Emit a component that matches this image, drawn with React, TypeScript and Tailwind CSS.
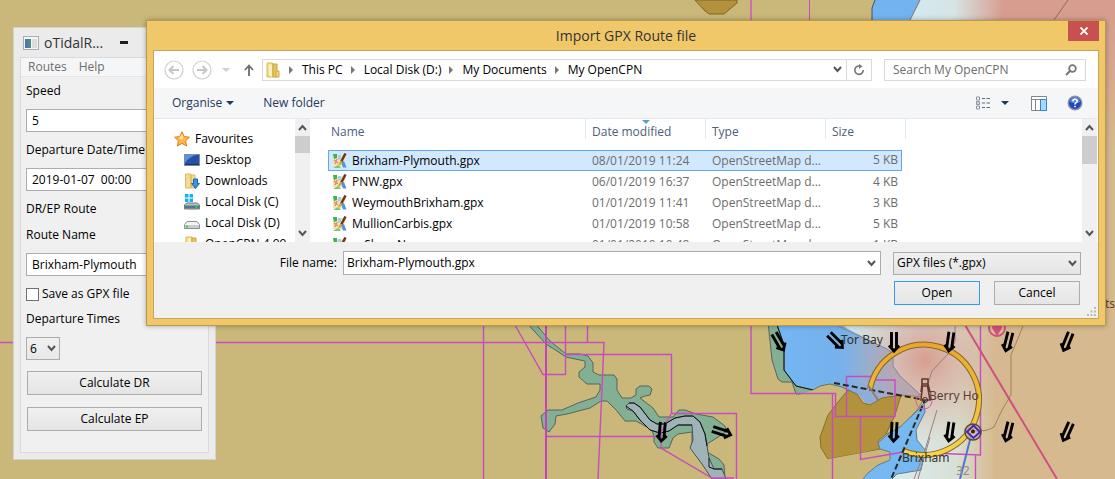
import type { ReactNode } from "react";

type Entry = { name: string; date: string; size: string };

const files: Entry[] = [
  { name: "Brixham-Plymouth.gpx", date: "08/01/2019 11:24", size: "5 KB" },
  { name: "PNW.gpx", date: "06/01/2019 16:37", size: "4 KB" },
  { name: "WeymouthBrixham.gpx", date: "01/01/2019 11:41", size: "3 KB" },
  { name: "MullionCarbis.gpx", date: "01/01/2019 10:58", size: "5 KB" },
  { name: "ruSharpNew.gpx", date: "01/01/2019 10:48", size: "1 KB" },
];

const arrows: [number, number, number][] = [
  [779, 342, -30],
  [836, 341, -45],
  [894, 342, 0],
  [950, 342, 8],
  [1008, 342, 14],
  [1067, 342, 22],
  [894, 432, 3],
  [950, 432, 8],
  [1008, 432, 14],
  [1067, 432, 24],
  [662, 432, 5],
  [722, 432, -72],
];

function Chart() {
  return (
    <svg
      className="absolute inset-0 h-full w-full"
      viewBox="0 0 1115 479"
      preserveAspectRatio="xMinYMin slice"
      aria-hidden="true"
    >
      <defs>
        <linearGradient id="topSea" x1="915" x2="1003" y1="0" y2="0" gradientUnits="userSpaceOnUse">
          <stop offset="0" stopColor="#d3e9f0" />
          <stop offset="0.45" stopColor="#d6e4e4" />
          <stop offset="1" stopColor="#d79e90" />
        </linearGradient>
        <linearGradient id="rightEdge" x1="0" x2="0" y1="20" y2="150" gradientUnits="userSpaceOnUse">
          <stop offset="0" stopColor="#d79e90" />
          <stop offset="1" stopColor="#d6b98f" />
        </linearGradient>
        <linearGradient id="lowSea" x1="840" x2="995" y1="0" y2="0" gradientUnits="userSpaceOnUse">
          <stop offset="0" stopColor="#cfe8f2" />
          <stop offset="0.45" stopColor="#d9e8e8" />
          <stop offset="0.75" stopColor="#d9e0d4" />
          <stop offset="1" stopColor="#d6b98f" />
        </linearGradient>
        <radialGradient id="glow" cx="925" cy="360" r="85" gradientUnits="userSpaceOnUse">
          <stop offset="0" stopColor="#d89a8c" stopOpacity="0.95" />
          <stop offset="0.4" stopColor="#d8a595" stopOpacity="0.6" />
          <stop offset="1" stopColor="#d8b8a0" stopOpacity="0" />
        </radialGradient>
        <linearGradient id="bay" x1="776" x2="925" y1="0" y2="0" gradientUnits="userSpaceOnUse">
          <stop offset="0" stopColor="#74b6f4" />
          <stop offset="0.5" stopColor="#76b0ea" />
          <stop offset="1" stopColor="#8fa6d4" />
        </linearGradient>
        <linearGradient id="ring" x1="0" x2="0" y1="343" y2="455" gradientUnits="userSpaceOnUse">
          <stop offset="0" stopColor="#eba52c" />
          <stop offset="1" stopColor="#f5d448" />
        </linearGradient>
      </defs>

      <rect width="1115" height="479" fill="#c9b87a" />
      <path d="M695 0 704 10 709 14H724L737 3V0Z" fill="#b2923d" stroke="#82651f" />
      <path d="M875 0 872 8V22H909L920 0Z" fill="#73b4f0" />
      <path d="M920 0 909 22H1115V0Z" fill="url(#topSea)" />
      <path d="M875 0 872 8V22" fill="none" stroke="#3f5568" />
      <path d="M920 0 909 22M1068 0 1054 20" fill="none" stroke="#8a6a66" />
      <rect x="1000" y="20" width="115" height="459" fill="url(#rightEdge)" />
      <path d="M751 0V22" stroke="#cf6fae" strokeWidth="2" />
      <path d="M809.500 0V22" stroke="#c64cbe" />

      <path d="M838 320H1012V479H860L890 455 925 400Z" fill="url(#lowSea)" />
      <path d="M776 322 784 345V370L796 385 813 390 820 386 830 384 842 387 850 391 860 396 866 404 873 404 882 398 901 395 925 399 900 376 893 366 893 353 887 349 838 324Z" fill="url(#bay)" />
      <rect x="830" y="320" width="190" height="140" fill="url(#glow)" />
      <path d="M838 326 887 349 893 353V366L900 376 925 399" fill="none" stroke="#7f8a99" />
      <path d="M768 322 772 360 778 379 782 382H792L796 394H806L813 390 796 386 784 370V345L776 322Z" fill="#83b092" stroke="#56645f" />
      <path d="M776 322 784 345V370L796 386 813 390" fill="none" stroke="#111" />
      <path d="M813 390 820 386 830 384 842 387 850 391 838 402 828 415 820 437V448L796 430 796 396Z" fill="#c9b87a" />
      <path d="M901 395 925 397 917 410 900 428 886 434Z" fill="#cfb47c" stroke="#9b8456" />
      <path d="M848 390 857 394 863 403 870 405 882 398 901 395 895 415 886 434 878 441 880 449 862 453 845 456 828 459 821 448 820 437 828 415 838 402Z" fill="#b2923d" stroke="#8a6e2a" />
      <path d="M878 450 890 454 890 460 878 465 868 473 862 480H840L828 459 845 456Z" fill="#c9b87a" />
      <path d="M924 403 917 411 900 427 888 434 878 443 880 449 890 452V460L878 465 868 473 862 480H891L897 474 921 470 925 450 917 440 916 430 925 412Z" fill="#76b8f0" stroke="#64788a" />
      <path d="M813 390 820 386 830 384 842 387 850 391" fill="none" stroke="#6b7160" />
      <path d="M937 410 925 450 914 479M930 437 918 479M955 326V342L948 354 932 371 926 390" fill="none" stroke="#958280" />
      <path d="M1023 326 1011 355V395L1002 410 994 427Q986 432 974 431" fill="none" stroke="#a5805f" />

      <path d="M751 322V393.500H835.500V416.500H860.500V459.500L903 452 980.500 455V322M832.500 393.500V479M846.500 416.500V376.500H872L876 380H895V416.500H860M975.500 455V479" fill="none" stroke="#c84bbf" strokeWidth="1.400" />
      <path d="M965 325 1057 479" stroke="#d05080" strokeWidth="2" />
      <circle cx="997" cy="328" r="8" fill="none" stroke="#d05080" strokeWidth="2" />
      <path d="M997 336 992 328Q993 321 997 322 1002 321 1002 328Z" fill="#d05080" />

      <path d="M870 389A55 55 0 1 1 904 451" fill="none" stroke="#80682d" strokeWidth="6" />
      <path d="M870 389A55 55 0 1 1 904 451" fill="none" stroke="url(#ring)" strokeWidth="4" />
      <path d="M834 383 925 400 891 479" fill="none" stroke="#2c2725" strokeWidth="2" strokeDasharray="6 3" />
      <path d="M868 385 878 400" stroke="#8c7c72" strokeWidth="2" />
      <circle cx="924" cy="401" r="8" fill="none" stroke="#d45bb8" />
      <path d="M921 400 922.500 386H927.500L930 400ZM922 379H928V384H922ZM922 384 921 392M928 384 930 392" fill="#d8b3a2" stroke="#62362d" strokeWidth="1.500" />
      <circle cx="925" cy="400" r="2.500" fill="none" stroke="#3a2b2b" />
      <path d="M971 436 960 479" stroke="#4f76d2" strokeWidth="2" />
      <circle cx="973" cy="432" r="8" fill="#d9b98f" fillOpacity="0.6" stroke="#554238" strokeWidth="1.500" />
      <path d="M973.500 425.500 980 432 973.500 438 967 432Z" fill="none" stroke="#3d27cf" strokeWidth="2" />
      <circle cx="973" cy="431.500" r="2" fill="#35201a" />

      <path d="M526 322 546 344 557 351 566 357 580 360 585 361 585 367 579 372V377L587 384H600L600 390 596 397 578 403 562 410H548L541 416 543 428 549 432 555 424 556 416 567 414 590 408 601 401H607L617 411 625 421H636L652 430 654 437V442L658 448H669L673 438 678 434 692 432V447L704 464 713 479H725L724 465 719 459 707 452V444L726 432 725 426 713 417 696 414 685 410H679L673 417H659L653 408 640 398 645 396 650 395 652 389 649 386H640L636 389V395L631 398H622L617 390V379L614 375H599L593 372 593 363 588 356 580 354H566L550 341 534 322Z" fill="#83b092" stroke="#56645f" />
      <path d="M629 403H634L640 407 650 420 657 424H665L675 418 685 416H693L700 422 705 434 707 446 709 458 714 469H722L726 479H712L702 464 690 448 693 440 692 425H678L669 431 660 433 650 430 640 420 633 411 627 409 626 406Z" fill="#a0b4b8" stroke="#46555a" />
      <path d="M629 403H634L640 407 650 420 657 424H665L675 418 685 416H693L700 422 705 434 707 446M709 458V467L714 469H722M626 406 633 411 640 420 650 430 660 433 669 431 678 425H692" fill="none" stroke="#111" />
      <path d="M0 342.500H604L598 479M483.500 322V479M515 325 543 374.500H565.500V322M587.500 322V342M545.500 436.500H662M565 354.500H671.500V413.500H736.500V479M671 414 661 432V448L712 478H734" fill="none" stroke="#c84bbf" strokeWidth="1.400" />
      <path d="M546 322V479" stroke="#c741bf" strokeWidth="2" />

      {arrows.map(([x, y, angle]) => (
        <g
          key={`${x}-${y}`}
          transform={`translate(${x} ${y}) rotate(${angle})`}
          fill="none"
          stroke="#000"
          strokeWidth="2.900"
        >
          <path d="M-2.500-10V7M2.500-10V7M-5 3.500 0 9 5 3.500" />
        </g>
      ))}

      <g fontFamily="Noto Sans, sans-serif" fontSize="12" fill="#33302f">
        <text x="841" y="344">Tor Bay</text>
        <text x="929" y="400" fill="#5d3c35">Berry Ho</text>
        <text x="902" y="462">Brixham</text>
        <text x="956" y="475" fill="#8f908c">32</text>
        <text x="1105" y="308" fill="#6b4423">ts</text>
      </g>
    </svg>
  );
}

function Chevron({ className = "" }: { className?: string }) {
  return (
    <svg viewBox="0 0 9 7" className={`h-[7px] w-[9px] ${className}`} aria-hidden="true">
      <path d="M1 1 4.500 5 8 1" fill="none" stroke="#555" strokeWidth="2" />
    </svg>
  );
}

function ScrollBar({ thumb }: { thumb: ReactNode }) {
  return (
    <div className="flex w-[15px] shrink-0 flex-col items-center bg-[#f0f0f0]" aria-hidden="true">
      <div className="flex h-[17px] items-center">
        <Chevron className="rotate-180" />
      </div>
      {thumb}
      <div className="mt-auto flex h-[17px] items-center">
        <Chevron />
      </div>
    </div>
  );
}

function FolderIcon() {
  return (
    <svg viewBox="0 0 16 16" className="h-4 w-4 shrink-0" aria-hidden="true">
      <path d="M2 1H8V15H2Z" fill="#f4de90" stroke="#d9b954" />
      <path d="M8 2H12V15H8Z" fill="#e4c561" stroke="#cda43f" />
      <path d="M4 2 7 3V15L4 13Z" fill="#fbf0bd" />
      <path d="M11 9H14V15H11Z" fill="#f2d66f" stroke="#cfa942" />
    </svg>
  );
}

function StarIcon() {
  return (
    <svg viewBox="0 0 16 16" className="h-4 w-4 shrink-0" aria-hidden="true">
      <path d="M8 .8 10.200 5.600 15.400 6.200 11.600 9.800 12.600 15 8 12.400 3.400 15 4.400 9.800.6 6.200 5.800 5.600Z" fill="#fdb845" stroke="#e07a24" />
      <path d="M8 3 9.400 6.500 8 9 5 7Z" fill="#ffe19a" />
    </svg>
  );
}

function DesktopIcon() {
  return (
    <svg viewBox="0 0 16 16" className="h-4 w-4 shrink-0" aria-hidden="true">
      <rect x=".5" y="2.500" width="15" height="11" fill="#2450a8" stroke="#7d8da8" />
      <path d="M1 3H12Q5 5 1 11Z" fill="#5c8fdc" />
      <path d="M1 12.500H15" stroke="#1a2e5a" />
    </svg>
  );
}

function DownloadsIcon() {
  return (
    <svg viewBox="0 0 16 16" className="h-4 w-4 shrink-0" aria-hidden="true">
      <path d="M1.500 1H7V15H1.500ZM7 2H11V15H7Z" fill="#f1dc92" stroke="#d9bb62" />
      <path d="M9.500 6H13.500V10.500H15.500L11.500 15.500 7.500 10.500H9.500Z" fill="#3f92e0" stroke="#1f63ad" />
    </svg>
  );
}

function DiskIcon({ system = false }: { system?: boolean }) {
  return (
    <svg viewBox="0 0 16 16" className="h-4 w-4 shrink-0" aria-hidden="true">
      {system ? (
        <>
          <path d="M2.500 9H13.500L15.500 11V15H.5V11Z" fill="#b8c1c8" stroke="#74787e" />
          <path d="M1 11.500H15V14.500H1Z" fill="#4d7a8e" />
          <path d="M1 0H4.500V3.500H1ZM5.500 0H9V3.500H5.500ZM1 4.500H4.500V8H1ZM5.500 4.500H9V8H5.500Z" fill="#16b4ec" />
        </>
      ) : (
        <>
          <path d="M3 6.500H13L15.500 9.500V13.500H.5V9.500Z" fill="#f4f4f6" stroke="#8b8e94" />
          <path d="M1 10H15V13H1Z" fill="#c9ccd2" />
        </>
      )}
      <path d={system ? "M12.500 12V14" : "M3 10.500V12.500"} stroke="#38d04a" strokeWidth="2" />
    </svg>
  );
}

function GpxIcon() {
  return (
    <svg viewBox="0 0 16 16" className="h-4 w-4 shrink-0" aria-hidden="true">
      <path d="M1 2 6 3 10 2 14 3 12 8 14 14 10 13 6 15 1 13Z" fill="#f3e7a8" />
      <path d="M1 1H5V5L2 6Z" fill="#3fb44e" />
      <path d="M6 2H9V6L6 7Z" fill="#a9cdf3" />
      <path d="M1 15 6 12 9 15Z" fill="#7cc47a" />
      <path d="M9 9 12 8 14.500 14.500H11Z" fill="#4f94e8" />
      <path d="M2 7 6 10M5 6 3 11" stroke="#dc8c86" strokeWidth="1.500" />
      <path d="M13.500.5 9 9" stroke="#74341c" strokeWidth="2.500" />
      <path d="M9.500 8 7 12" stroke="#d8a13b" strokeWidth="2" />
    </svg>
  );
}

function SideItem({ icon, label, root = false }: { icon: ReactNode; label: string; root?: boolean }) {
  return (
    <li>
      <a href="#" className={`flex h-[21px] items-center gap-[5px] ${root ? "pl-5" : "pl-[30px]"}`}>
        {icon}
        <span className="whitespace-nowrap">{label}</span>
      </a>
    </li>
  );
}

function NavCircle({ label, flip = false }: { label: string; flip?: boolean }) {
  return (
    <button type="button" aria-label={label}>
      <svg viewBox="0 0 20 20" className={`h-5 w-5 ${flip ? "rotate-180" : ""}`} aria-hidden="true">
        <circle cx="10" cy="10" r="9" fill="#fff" stroke="#cfcfcf" strokeWidth="1.200" />
        <path d="M15 10H6.500M9.500 6 5.500 10 9.500 14" fill="none" stroke="#c6c6c6" strokeWidth="2" />
      </svg>
    </button>
  );
}

const crumbs = ["This PC", "Local Disk (D:)", "My Documents", "My OpenCPN"];
const fieldClass = "h-[23px] w-full border border-[#abadb3] bg-white px-[5px] text-xs text-black outline-none";
const buttonClass = "h-6 border border-[#acacac] bg-linear-to-b from-[#f0f0f0] to-[#e5e5e5] text-center leading-5";

function TidalWindow() {
  return (
    <section className="absolute top-[27px] left-[13px] w-[203px] border border-[#d2d2d2] bg-[#ebebeb] px-[6px] pb-[6px]">
      <header className="flex h-[29px] items-center text-[#333]">
        <svg viewBox="0 0 16 14" className="ml-[3px] h-[14px] w-4" aria-hidden="true">
          <rect x=".5" y=".5" width="15" height="13" fill="#f5f5f5" stroke="#a9adb3" />
          <path d="M2 3H8V12H2Z" fill="#4d8a8d" />
          <path d="M2 3H5V12H2Z" fill="#5275a2" />
          <path d="M9 3H14V12H9Z" fill="#dcdcdc" />
        </svg>
        <h1 className="ml-[5px] text-sm">oTidalR...</h1>
        <button type="button" aria-label="Minimise" className="ml-[17px] h-[3px] w-2 bg-[#1e1e1e]" />
      </header>
      <div className="border border-[#dadada] bg-[#f0f0f0] pb-[21px]">
        <nav className="flex h-[19px] items-center gap-3 border-b border-[#e6e6e6] bg-[#f5f6f7] pl-[7px] text-[#6d6d6d]">
          <button type="button">Routes</button>
          <button type="button">Help</button>
        </nav>
        <form className="flex flex-col px-[5px] pt-1" onSubmit={(e) => e.preventDefault()}>
          <label htmlFor="speed" className="leading-5">Speed</label>
          <input id="speed" defaultValue="5" className={`mt-2 ${fieldClass}`} />
          <label htmlFor="departure" className="mt-2 leading-5">Departure Date/Time</label>
          <input id="departure" defaultValue="2019-01-07  00:00" className={`mt-2 ${fieldClass}`} />
          <p className="mt-2 leading-5">DR/EP Route</p>
          <label htmlFor="route" className="mt-[6px] leading-5">Route Name</label>
          <input id="route" defaultValue="Brixham-Plymouth" className={`mt-2 ${fieldClass}`} />
          <label className="mt-2 flex items-center gap-[3px] leading-5">
            <input type="checkbox" className="h-[13px] w-[13px] appearance-none border border-[#707070] bg-white" />
            Save as GPX file
          </label>
          <label htmlFor="times" className="mt-[5px] leading-5">Departure Times</label>
          <div className="mt-2 grid w-[34px] items-center">
            <select id="times" className="col-start-1 row-start-1 h-[23px] appearance-none border border-[#acacac] bg-linear-to-b from-[#f0f0f0] to-[#e8e8e8] pl-[3px]">
              <option>6</option>
            </select>
            <Chevron className="pointer-events-none col-start-1 row-start-1 mr-1 justify-self-end" />
          </div>
          <button type="button" className={`mx-px mt-[11px] ${buttonClass}`}>Calculate DR</button>
          <button type="button" className={`mx-px mt-3 ${buttonClass}`}>Calculate EP</button>
        </form>
      </div>
    </section>
  );
}

function ImportDialog() {
  return (
    <section
      role="dialog"
      aria-label="Import GPX Route file"
      className="absolute top-5 right-[9px] left-[146px] border border-[#b99a4d] bg-[#f0c869] px-[6px] pb-[6px] shadow-[0_0_5px_rgba(0,0,0,0.3)]"
    >
      <header className="grid h-[29px] grid-cols-[1fr_auto_1fr] text-[#333]">
        <h2 className="col-start-2 self-center text-sm">Import GPX Route file</h2>
        <button type="button" aria-label="Close" className="flex h-5 w-[31px] items-center justify-center justify-self-end bg-[#c75050]">
          <svg viewBox="0 0 8 8" className="h-2 w-2" aria-hidden="true">
            <path d="M.5.5 7.500 7.500M7.500.5.5 7.500" stroke="#fff" strokeWidth="1.800" />
          </svg>
        </button>
      </header>

      <div className="border border-[#c9a558] bg-[#f0f0f0]">
        <div className="flex h-[37px] items-center bg-white pr-3 pl-[10px]">
          <NavCircle label="Back" />
          <span className="ml-2 flex"><NavCircle label="Forward" flip /></span>
          <svg viewBox="0 0 8 4" className="ml-[10px] h-1 w-2" aria-hidden="true">
            <path d="M0 0H8L4 4Z" fill="#d0d0d0" />
          </svg>
          <button type="button" aria-label="Up" className="ml-[14px]">
            <svg viewBox="0 0 10 12" className="h-3 w-[10px]" aria-hidden="true">
              <path d="M5 12V2M1 6 5 1.500 9 6" fill="none" stroke="#6d6d6d" strokeWidth="1.800" />
            </svg>
          </button>
          <div className="ml-2 flex h-[22px] min-w-0 flex-1 items-center border border-[#d9d9d9] pl-[2px]">
            <FolderIcon />
            <ol className="ml-2 flex items-center">
              {crumbs.map((crumb) => (
                <li key={crumb} className="flex items-center">
                  <svg viewBox="0 0 4 8" className="h-2 w-1" aria-hidden="true">
                    <path d="M0 0 4 4 0 8Z" fill="#777" />
                  </svg>
                  <a href="#" className="mr-2 ml-[9px] whitespace-nowrap">{crumb}</a>
                </li>
              ))}
            </ol>
            <button type="button" aria-label="Previous locations" className="mr-1 ml-auto">
              <Chevron />
            </button>
            <button type="button" aria-label="Refresh" className="flex h-full w-[25px] items-center justify-center border-l border-[#d9d9d9]">
              <svg viewBox="0 0 12 12" className="h-3 w-3" aria-hidden="true">
                <path d="M6.500 2A4.200 4.200 0 1 0 10.200 6" fill="none" stroke="#777" strokeWidth="1.600" />
                <path d="M6 0V5L9.500 2.200Z" fill="#777" />
              </svg>
            </button>
          </div>
          <label className="ml-3 flex h-[22px] w-[202px] items-center border border-[#d9d9d9] px-2">
            <input aria-label="Search My OpenCPN" placeholder="Search My OpenCPN" className="min-w-0 flex-1 outline-none placeholder:text-[#6d6d6d]" />
            <svg viewBox="0 0 12 12" className="h-3 w-3" aria-hidden="true">
              <circle cx="7.500" cy="4.500" r="3.300" fill="none" stroke="#777" strokeWidth="1.800" />
              <path d="M5 7 1 11" stroke="#777" strokeWidth="2" />
            </svg>
          </label>
        </div>

        <div className="flex h-[31px] items-center border-b border-[#e4e8ed] bg-[#f5f6f7] pr-[15px] pl-[18px] text-[#1e395b]">
          <button type="button" className="flex items-center gap-1">
            Organise
            <svg viewBox="0 0 8 4" className="h-1 w-2" aria-hidden="true"><path d="M0 0H8L4 4Z" fill="#1e395b" /></svg>
          </button>
          <button type="button" className="ml-[29px]">New folder</button>
          <button type="button" aria-label="Change your view" className="ml-auto flex items-center gap-[10px]">
            <svg viewBox="0 0 16 14" className="h-[14px] w-4" aria-hidden="true">
              <path d="M1.500 1H4.500V4H1.500ZM1.500 5.500H4.500V8.500H1.500ZM1.500 10H4.500V13H1.500Z" fill="#fff" stroke="#8996a8" />
              <path d="M7 2.500H10M11.500 2.500H15M7 7H10M11.500 7H15M7 11.500H10M11.500 11.500H15" stroke="#5a6b85" />
              <path d="M2.500 7H3.500" stroke="#b4343e" />
            </svg>
            <svg viewBox="0 0 8 4" className="h-1 w-2" aria-hidden="true"><path d="M0 0H8L4 4Z" fill="#1e395b" /></svg>
          </button>
          <button type="button" aria-label="Show the preview pane" className="ml-[22px]">
            <svg viewBox="0 0 16 15" className="h-[15px] w-4" aria-hidden="true">
              <path d="M.5.5H15.500V14.500H.5ZM.5 3.500H15.500M4.500 3.500V14" fill="#fff" stroke="#7f868f" />
              <path d="M9.500 3.500H15.500V14.500H9.500Z" fill="#a9d6fb" stroke="#2f86d6" />
            </svg>
          </button>
          <button type="button" aria-label="Get help" className="ml-5">
            <svg viewBox="0 0 16 16" className="h-4 w-4" aria-hidden="true">
              <circle cx="8" cy="8" r="6.800" fill="#2148bd" stroke="#8b93a4" strokeWidth="1.400" />
              <path d="M3 7A5 5 0 0 1 13 7Q8 9 3 7Z" fill="#5b84e4" />
              <path d="M5.800 6.300Q6 4.300 8 4.300T10.200 6.200Q10.100 7.300 8.900 7.900 8 8.400 8 9.600" fill="none" stroke="#fff" strokeWidth="1.600" />
              <path d="M7.200 10.700H8.800V12.200H7.200Z" fill="#fff" />
            </svg>
          </button>
        </div>

        <div className="flex h-[123px] bg-white">
          <nav className="flex w-[156px] shrink-0 overflow-hidden" aria-label="Places">
            <ul className="min-w-0 flex-1 overflow-hidden pt-[9px]">
              <SideItem root icon={<StarIcon />} label="Favourites" />
              <SideItem icon={<DesktopIcon />} label="Desktop" />
              <SideItem icon={<DownloadsIcon />} label="Downloads" />
              <SideItem icon={<DiskIcon system />} label="Local Disk (C)" />
              <SideItem icon={<DiskIcon />} label="Local Disk (D)" />
              <SideItem icon={<FolderIcon />} label="OpenCPN 4.99" />
            </ul>
            <ScrollBar thumb={<div className="h-[17px] w-full bg-[#cdcdcd]" />} />
          </nav>
          <div className="ml-[18px] min-w-0 flex-1 overflow-hidden">
            <table className="w-[578px] table-fixed border-separate border-spacing-0">
              <colgroup>
                <col className="w-[258px]" />
                <col className="w-[120px]" />
                <col className="w-[120px]" />
                <col className="w-[80px]" />
              </colgroup>
              <thead>
                <tr className="text-left text-[#4c607a]">
                  {["Name", "Date modified", "Type", "Size"].map((title, i) => (
                    <th key={title} scope="col" className="h-[31px] p-0 align-top font-normal">
                      <div className={`relative h-5 border-r border-[#e2eaf4] pt-[4px] leading-[18px] ${i === 0 ? "pl-[3px]" : "pl-[6px]"}`}>
                        {title}
                        {i === 1 ? (
                          <svg viewBox="0 0 8 4" className="absolute top-px left-[56px] h-1 w-2" aria-hidden="true">
                            <path d="M0 0H8L4 4Z" fill="#5f9fc6" />
                          </svg>
                        ) : null}
                      </div>
                    </th>
                  ))}
                </tr>
              </thead>
              <tbody>
                {files.map((file, i) => {
                  const on = i === 0;
                  const cell = on ? "h-[21px] p-0 border-y border-[#66a7e8] bg-[#d1e8ff]" : "h-[21px] p-0";
                  return (
                    <tr key={file.name} aria-selected={on} className="leading-[18px] text-[#6d6d6d]">
                      <td className={on ? `${cell} border-l` : `${cell} border-l border-transparent`}>
                        <span className="flex items-center gap-1 pl-[3px] text-black">
                          <GpxIcon />
                          {file.name}
                        </span>
                      </td>
                      <td className={`${cell} pl-[6px]`}>{file.date}</td>
                      <td className={`${cell} pl-[6px]`}>OpenStreetMap d...</td>
                      <td className="h-[21px] p-0 pr-1">
                        <div className={on ? "h-[21px] border border-l-0 border-[#66a7e8] bg-[#d1e8ff] pr-[3px] text-right" : "pr-1 text-right"}>
                          {file.size}
                        </div>
                      </td>
                    </tr>
                  );
                })}
              </tbody>
            </table>
          </div>
          <ScrollBar thumb={<div className="h-7 w-full bg-[#cdcdcd]" />} />
          <div className="w-px" />
        </div>

        <footer className="pt-[9px] pr-[17px] pb-[13px]">
          <div className="flex">
            <label htmlFor="filename" className="w-[189px] pr-[6px] text-right leading-6">File name:</label>
            <div className="flex h-6 min-w-0 flex-1 items-center border border-[#abadb3] bg-white pr-1">
              <input id="filename" defaultValue="Brixham-Plymouth.gpx" className="min-w-0 flex-1 pl-[3px] outline-none" />
              <button type="button" aria-label="Recent file names">
                <Chevron />
              </button>
            </div>
            <div className="ml-3 grid w-[188px] items-center">
              <select aria-label="File type" className="col-start-1 row-start-1 h-[23px] appearance-none border border-[#acacac] bg-linear-to-b from-[#f0f0f0] to-[#e5e5e5] pl-[3px]">
                <option>GPX files (*.gpx)</option>
              </select>
              <Chevron className="pointer-events-none col-start-1 row-start-1 mr-1 justify-self-end" />
            </div>
          </div>
          <div className="mt-[6px] mr-px flex justify-end gap-[14px]">
            <button type="button" className="h-6 w-[86px] border border-[#3399ff] bg-linear-to-b from-[#f0f0f0] to-[#e5e5e5] leading-5">Open</button>
            <button type="button" className={`w-[86px] ${buttonClass}`}>Cancel</button>
          </div>
        </footer>
      </div>
      <svg viewBox="0 0 9 9" className="absolute right-[9px] bottom-[9px] h-[9px] w-[9px]" aria-hidden="true">
        <path d="M7 0H9V2H7ZM7 3.500H9V5.500H7ZM3.500 3.500H5.500V5.500H3.500ZM7 7H9V9H7ZM3.500 7H5.500V9H3.500ZM0 7H2V9H0Z" fill="#bcbcbc" />
      </svg>
    </section>
  );
}

export default function App() {
  return (
    <main className="relative h-screen w-full overflow-hidden bg-[#c9b87a] font-['Open_Sans','Noto_Sans',sans-serif] text-xs text-black">
      <Chart />
      <TidalWindow />
      <ImportDialog />
    </main>
  );
}
